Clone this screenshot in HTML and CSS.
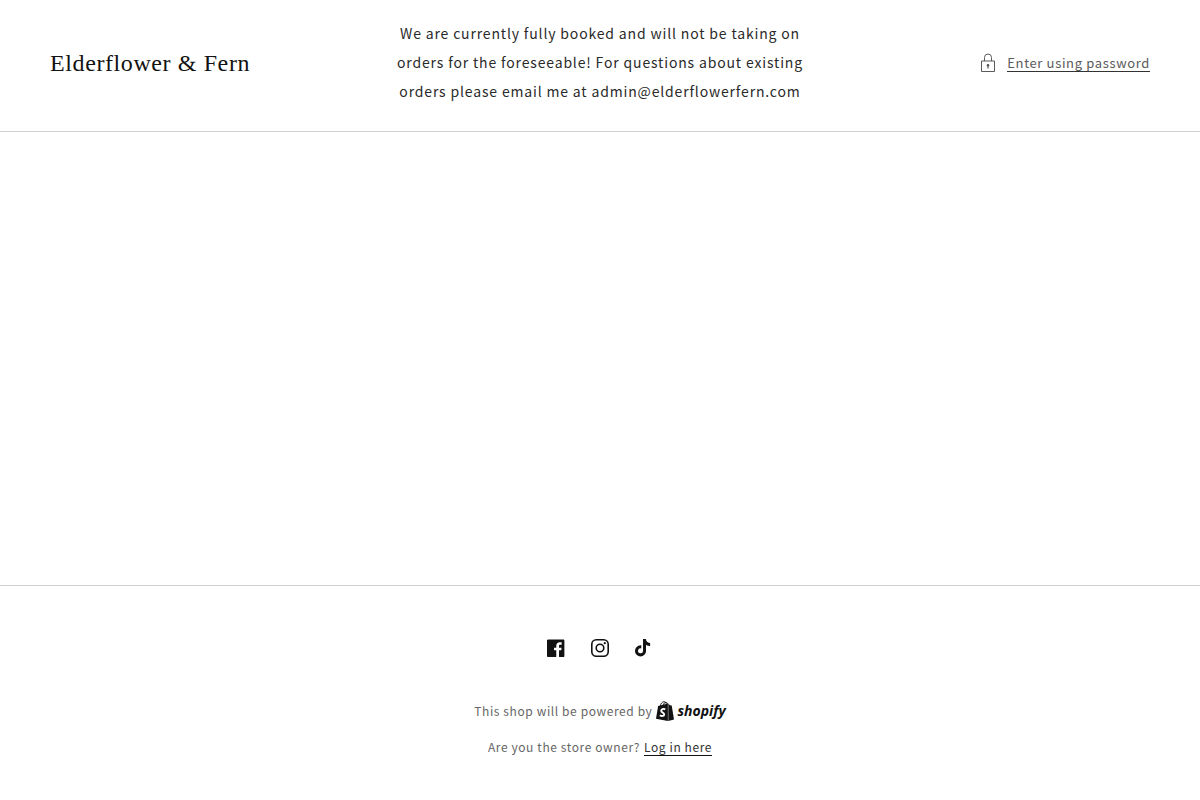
FILE: index.html
```html
<!doctype html>
<html lang="en">
    <head>
        <meta charset="utf-8">
        <meta name="viewport" content="width=device-width,initial-scale=1">
        <title>Elderflower &amp; Fern</title>
        <link rel="stylesheet" href="styles.css">
    </head>
    <body>
        <header class="password-header">
            <h1 class="password-logo">Elderflower &amp; Fern</h1>
            <p class="password-message">We are currently fully booked and will not be taking on orders for the foreseeable! For questions about existing orders please email me at admin@elderflowerfern.com</p>
            <a class="password-link" href="#password">
                <svg class="icon-lock" viewBox="0 0 16 20" fill="none" stroke="currentColor" aria-hidden="true">
                    <path d="M1.500 8h13v10.500h-13z"/>
                    <path d="M4.500 8V4.500a3.500 3.500 0 0 1 7 0V8"/>
                    <path d="M8 11.500v4" stroke-width="1.200"/>
                    <circle cx="8" cy="12.300" r="1.300" fill="currentColor" stroke="none"/>
                </svg>
                <span class="link-text">Enter using password</span>
            </a>
        </header>

        <main class="password-main"></main>

        <footer class="password-footer">
            <ul class="social-list">
                <li>
                    <a class="social-link" href="#facebook" aria-label="Facebook">
                        <svg class="icon" viewBox="0 0 18 18" fill="currentColor">
                            <path d="M16.42.61c.27 0 .5.1.69.28.19.2.28.42.28.7v15.44c0 .27-.1.5-.28.69a.94.94 0 01-.7.28h-4.39v-6.7h2.25l.31-2.65h-2.56v-1.7c0-.4.1-.72.28-.93.18-.2.5-.32 1-.32h1.37V3.35c-.6-.06-1.27-.1-2.01-.1-1.01 0-1.83.3-2.45.9-.62.6-.93 1.44-.93 2.53v1.97H7.04v2.65h2.24V18H.98c-.28 0-.5-.1-.7-.28a.94.94 0 01-.28-.7V1.59c0-.27.1-.5.28-.69a.94.94 0 01.7-.28h15.44z"/>
                        </svg>
                    </a>
                </li>
                <li>
                    <a class="social-link" href="#instagram" aria-label="Instagram">
                        <svg class="icon" viewBox="0 0 18 18" fill="none" stroke="currentColor" stroke-width="1.6">
                            <rect x=".8" y=".8" width="16.400" height="16.400" rx="4.500"/>
                            <circle cx="9" cy="9" r="3.800"/>
                            <circle cx="13.800" cy="4.200" r="1.100" fill="currentColor" stroke="none"/>
                        </svg>
                    </a>
                </li>
                <li>
                    <a class="social-link" href="#tiktok" aria-label="TikTok">
                        <svg class="icon" viewBox="0 0 18 18" fill="currentColor">
                            <path d="M8.02 0H11s-.17 3.82 4.13 4.1v2.95s-2.3.14-4.13-1.26l.03 6.1a5.52 5.52 0 11-5.51-5.52h.77V9.4a2.5 2.5 0 101.76 2.4L8.02 0z"/>
                        </svg>
                    </a>
                </li>
            </ul>
            <p class="footer-line">
                This shop will be powered by
                <a class="shopify-link" href="#shopify">
                    <svg class="icon-bag" viewBox="0 0 18 20" aria-hidden="true">
                        <path fill="currentColor" d="M2.100 4.900 11.900 2.600V20L0 17.800zM12.300 2.700l1.700 1.600 1.700.2L18 18.600 12.300 20z"/>
                        <path fill="none" stroke="currentColor" stroke-width=".9" d="M4.300 5C4.800 2.500 6.300.7 8 .7c1.700 0 2.400 1.600 2.400 3.300M7 4.300C7.600 2.400 8.800 1.300 10 1.400c1.200.1 1.800 1 2 2"/>
                        <path fill="none" stroke="#fff" stroke-width="1.900" d="M9.300 8.300C7.500 7.300 5.200 8.100 5.200 9.900c0 1.700 3 1.700 3 3.500 0 1.700-2.300 2.100-4.400.8"/>
                    </svg>
                    <span class="shopify-word">shopify</span>
                </a>
            </p>
            <p class="footer-line">Are you the store owner? <a class="login-link" href="#login">Log in here</a></p>
        </footer>
    </body>
</html>
```
FILE: styles.css
```css
* {
    box-sizing: border-box;
}
body {
    margin: 0;
    min-height: 100vh;
    display: flex;
    flex-direction: column;
    background-color: #fff;
    color: #2a2a2a;
    font-family: "Noto Sans CJK SC", "Noto Sans", sans-serif;
    font-size: 14px;
    font-weight: 400;
}
a {
    color: inherit;
}

/* header */
.password-header {
    display: grid;
    grid-template-columns: 2fr 3fr 2fr;
    align-items: center;
    column-gap: 30px;
    padding: 19px 50px 25px;
    border-bottom: 1px solid #d0d0d0;
}
.password-logo {
    margin: 0;
    color: #121212;
    font-family: "Liberation Serif", serif;
    font-size: 24px;
    font-weight: 400;
    line-height: 32px;
    letter-spacing: 0.025em;
}
.password-message {
    margin: 0;
    line-height: 29px;
    letter-spacing: 0.06em;
    text-align: center;
}
.password-link {
    justify-self: end;
    display: flex;
    align-items: center;
    gap: 11px;
    color: #5a5a5a;
    font-size: 13px;
    line-height: 17px;
    letter-spacing: 0.05em;
    text-decoration: none;
    white-space: nowrap;
}
.link-text {
    border-bottom: 1px solid #333;
}
.icon-lock {
    width: 16px;
    height: 20px;
}

.password-main {
    flex-grow: 1;
}

/* footer */
.password-footer {
    padding: 40px 50px 35px;
    border-top: 1px solid #d0d0d0;
    color: #666;
    font-size: 12px;
    letter-spacing: 0.05em;
    text-align: center;
}
.social-list {
    display: flex;
    justify-content: center;
    margin: 0 0 23px;
    padding: 0;
    list-style: none;
}
.social-link {
    display: flex;
    align-items: center;
    justify-content: center;
    width: 44px;
    height: 44px;
    color: #121212;
}
.icon {
    width: 18px;
    height: 18px;
}
.footer-line {
    display: flex;
    align-items: center;
    justify-content: center;
    gap: 4px;
    margin: 0;
    line-height: 36px;
}
.shopify-link {
    display: flex;
    align-items: center;
    gap: 3px;
    color: #121212;
    letter-spacing: 0;
    text-decoration: none;
}
.shopify-word {
    font-family: "Open Sans", sans-serif;
    font-size: 14px;
    font-style: italic;
    font-weight: 700;
}
.icon-bag {
    width: 18px;
    height: 20px;
}
.login-link {
    border-bottom: 1px solid #121212;
    color: #333;
    line-height: 16px;
    text-decoration: none;
}
```
